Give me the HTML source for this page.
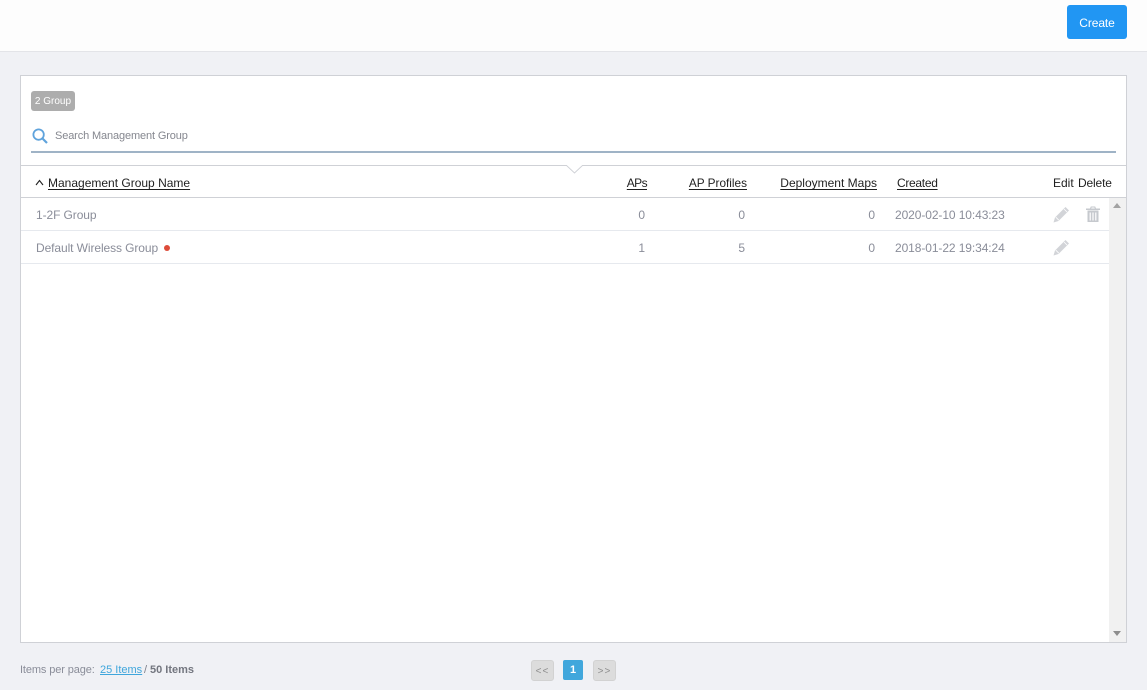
<!DOCTYPE html>
<html><head><meta charset="utf-8">
<style>
html,body{margin:0;padding:0}
body{width:1147px;height:690px;overflow:hidden;background:#f0f1f5;position:relative;font-family:"Liberation Sans",sans-serif;font-size:12px}
.a{position:absolute;white-space:nowrap;line-height:16px}
.h{color:#1f1f1f;text-decoration:underline;text-underline-offset:2px}
.g{color:#8a8d99;letter-spacing:-.09px}
.r{text-align:right}
.l{position:absolute;height:1px}
svg{position:absolute}
</style></head><body>
<div class="a" style="left:0;top:0;width:1147px;height:51px;background:#fdfdfd;border-bottom:1px solid #e3e4e8"></div>
<div class="a" style="left:1067px;top:5px;width:60px;height:34px;line-height:36px;background:#2196f3;border-radius:3px;color:#fff;text-align:center;letter-spacing:-.1px">Create</div>

<div class="a" style="left:20px;top:75px;width:1105px;height:566px;background:#fff;border:1px solid #cfd1d6"></div>
<div class="a" style="left:31px;top:91px;width:44px;height:20px;line-height:22px;background:#adadad;border-radius:3px;color:#fff;font-size:10px;text-align:center">2 Group</div>
<svg style="left:32px;top:128px" width="16" height="16" viewBox="0 0 16 16"><circle cx="6.6" cy="6.6" r="5.2" fill="none" stroke="#5fa3dc" stroke-width="1.8"/><path d="M10.4 10.4L15 15" stroke="#5fa3dc" stroke-width="2.2" fill="none"/></svg>
<div class="a" style="left:55px;top:128px;line-height:17px;color:#85878f;font-size:11px;letter-spacing:-.13px">Search Management Group</div>
<div class="l" style="left:31px;top:151px;width:1085px;height:2px;background:#9fb3c6"></div>

<div class="l" style="left:21px;top:165px;width:1105px;background:#cfd1d6"></div>
<svg style="left:566px;top:165px" width="17" height="9" viewBox="0 0 17 9"><path d="M0 0L8.5 8L17 0" fill="#fff" stroke="#cfd1d6"/><path d="M1 0H16" stroke="#fff"/></svg>

<svg style="left:35px;top:179px" width="9" height="7" viewBox="0 0 9 7"><path d="M1 6L4.5 1.5L8 6" fill="none" stroke="#222" stroke-width="1.1"/></svg>
<div class="a h" style="left:48px;top:175px">Management Group Name</div>
<div class="a h r" style="right:500px;top:175px;letter-spacing:-.6px">APs</div>
<div class="a h r" style="right:400px;top:175px;font-size:11.8px">AP Profiles</div>
<div class="a h r" style="right:270px;top:175px">Deployment Maps</div>
<div class="a h" style="left:897px;top:175px;letter-spacing:-.3px">Created</div>
<div class="a" style="left:1053px;top:175px;color:#1f1f1f">Edit</div>
<div class="a" style="left:1078px;top:175px;color:#1f1f1f;letter-spacing:-.15px">Delete</div>
<div class="l" style="left:21px;top:197px;width:1105px;background:#cfd1d6"></div>

<div class="a g" style="left:36px;top:207px">1-2F Group</div>
<div class="a g r" style="right:502px;top:207px">0</div>
<div class="a g r" style="right:402px;top:207px">0</div>
<div class="a g r" style="right:272px;top:207px">0</div>
<div class="a g" style="left:895px;top:207px">2020-02-10 10:43:23</div>
<div class="l" style="left:21px;top:230px;width:1088px;background:#e6e9ee"></div>

<div class="a g" style="left:36px;top:240px">Default Wireless Group</div>
<div class="a" style="left:164px;top:245px;width:6px;height:6px;border-radius:50%;background:#dd4b39"></div>
<div class="a g r" style="right:502px;top:240px">1</div>
<div class="a g r" style="right:402px;top:240px">5</div>
<div class="a g r" style="right:272px;top:240px">0</div>
<div class="a g" style="left:895px;top:240px">2018-01-22 19:34:24</div>
<div class="l" style="left:21px;top:263px;width:1088px;background:#e6e9ee"></div>

<svg style="left:1053px;top:206px" width="17" height="17" viewBox="0 0 17 17"><path d="M12.5 1L16 4.5L5.5 15L0.500 16.500L2 11.500Z" fill="#d2d4d8"/><path d="M2.800 11.200L5.800 14.200M11 3L14 6" stroke="#fff" stroke-width=".8"/></svg>
<svg style="left:1053px;top:239px" width="17" height="17" viewBox="0 0 17 17"><path d="M12.500 1L16 4.500L5.500 15L0.500 16.500L2 11.500Z" fill="#d2d4d8"/><path d="M2.800 11.200L5.800 14.200M11 3L14 6" stroke="#fff" stroke-width=".8"/></svg>
<svg style="left:1086px;top:206px" width="14" height="16" viewBox="0 0 14 16"><path d="M0 2.500H14V4H0ZM4 2.500L4.800 .5H9.200L10 2.500H8.800L8.400 1.500H5.600L5.200 2.500Z" fill="#c6c9ce"/><path d="M1.500 4.500H12.500V16H1.500ZM3.600 6.500V14.500H4.800V6.500ZM6.400 6.500V14.500H7.600V6.500ZM9.200 6.500V14.500H10.400V6.500Z" fill="#c6c9ce" fill-rule="evenodd"/></svg>

<div class="a" style="left:1109px;top:198px;width:17px;height:444px;background:#f1f1f1"></div>
<svg style="left:1113px;top:203px" width="8" height="5" viewBox="0 0 8 5"><path d="M0 5L4 0L8 5Z" fill="#a3a3a3"/></svg>
<svg style="left:1113px;top:631px" width="8" height="5" viewBox="0 0 8 5"><path d="M0 0L4 5L8 0Z" fill="#8e8e8e"/></svg>

<div class="a" style="left:20px;top:662px;color:#8a8d99;font-size:11px;letter-spacing:-.12px">Items per page:</div>
<div class="a" style="left:100px;top:662px;color:#3fa6dc;font-size:11px;text-decoration:underline">25 Items</div>
<div class="a" style="left:144px;top:662px;color:#7d808c;font-size:11px">/</div>
<div class="a" style="left:150px;top:662px;color:#73767f;font-size:11px;font-weight:bold">50 Items</div>

<div class="a" style="left:531px;top:660px;width:21px;height:19px;line-height:21px;background:#dcdcdc;border:1px solid #d2d2d2;border-radius:3px;color:#8e8e8e;font-size:10px;text-align:center;letter-spacing:1px">&lt;&lt;</div>
<div class="a" style="left:563px;top:660px;width:20px;height:20px;line-height:21px;background:#41a7dc;border:0;border-radius:2px;color:#fff;font-size:11px;font-weight:bold;text-align:center">1</div>
<div class="a" style="left:593px;top:660px;width:21px;height:19px;line-height:21px;background:#dcdcdc;border:1px solid #d2d2d2;border-radius:3px;color:#8e8e8e;font-size:10px;text-align:center;letter-spacing:1px">&gt;&gt;</div>
</body></html>
